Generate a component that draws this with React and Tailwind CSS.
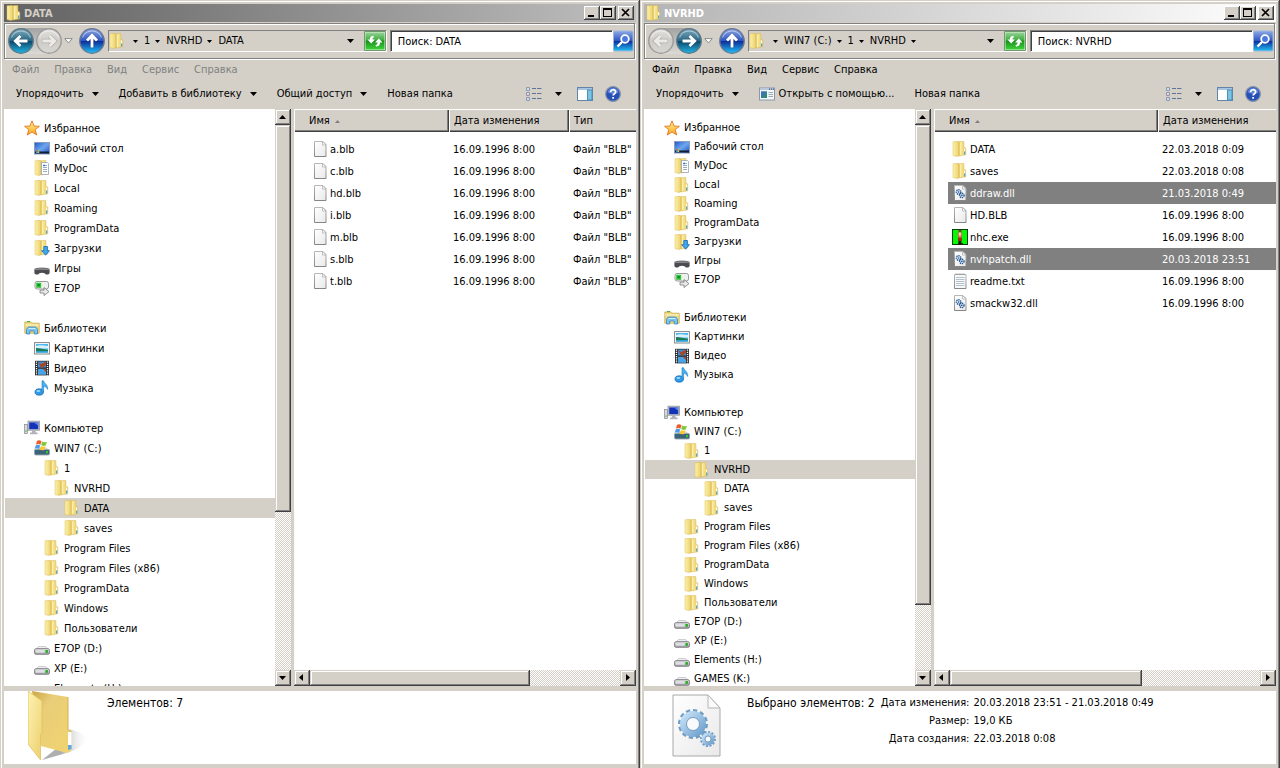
import { useState } from 'react';
import clsx from 'clsx';

const RAISED =
  'bg-[#d4d0c8] shadow-[inset_-1px_-1px_#404040,inset_1px_1px_#d4d0c8,inset_-2px_-2px_#808080,inset_2px_2px_#ffffff]';
const BUTTON =
  'bg-[#d4d0c8] shadow-[inset_-1px_-1px_#404040,inset_1px_1px_#ffffff,inset_-2px_-2px_#808080]';
const TRACK = 'bg-[conic-gradient(#d4d0c8_25%,#ffffff_0_50%,#d4d0c8_0_75%,#ffffff_0)] bg-[size:2px_2px]';

/* ---------- icons ---------- */

const Defs = () => (
  <svg width="0" height="0" className="absolute" aria-hidden="true">
    <defs>
      <linearGradient id="flap" x1="0" x2="1" y1="0" y2="0">
        <stop offset="0" stopColor="#fdf2a8" />
        <stop offset="1" stopColor="#ecd070" />
      </linearGradient>
      <linearGradient id="sheet" x1="0" x2="1" y1="0" y2="0">
        <stop offset="0" stopColor="#cfa93c" />
        <stop offset="0.45" stopColor="#f8e694" />
        <stop offset="1" stopColor="#e8ca62" />
      </linearGradient>
      <linearGradient id="bigFlap" x1="0" x2="1" y1="0" y2="1">
        <stop offset="0" stopColor="#fdf3b4" />
        <stop offset="1" stopColor="#edcf6c" />
      </linearGradient>
      <linearGradient id="bigBack" x1="0" x2="1" y1="0" y2="1">
        <stop offset="0" stopColor="#c9a646" />
        <stop offset="0.3" stopColor="#e9cd78" />
        <stop offset="1" stopColor="#f1d46e" />
      </linearGradient>
      <linearGradient id="shade" x1="0" x2="1" y1="0" y2="0">
        <stop offset="0.4" stopColor="#8c8c8c" stopOpacity="0.7" />
        <stop offset="1" stopColor="#ffffff" stopOpacity="0" />
      </linearGradient>
      <linearGradient id="page" x1="0" x2="1" y1="0" y2="1">
        <stop offset="0" stopColor="#ffffff" />
        <stop offset="1" stopColor="#e9e9e9" />
      </linearGradient>
      <linearGradient id="pageEdge" x1="0" x2="0" y1="0" y2="1">
        <stop offset="0" stopColor="#b8b8b8" />
        <stop offset="1" stopColor="#868686" />
      </linearGradient>
      <linearGradient id="teal" x1="0" x2="0" y1="0" y2="1">
        <stop offset="0" stopColor="#7fa9bb" />
        <stop offset="0.48" stopColor="#2b6a88" />
        <stop offset="0.52" stopColor="#0d4a6c" />
        <stop offset="1" stopColor="#22b4e6" />
      </linearGradient>
      <linearGradient id="royal" x1="0" x2="0" y1="0" y2="1">
        <stop offset="0" stopColor="#8fa9e4" />
        <stop offset="0.48" stopColor="#2f58c4" />
        <stop offset="0.52" stopColor="#0f2f9c" />
        <stop offset="1" stopColor="#1fc2f4" />
      </linearGradient>
      <linearGradient id="dim" x1="0" x2="0" y1="0" y2="1">
        <stop offset="0" stopColor="#e2e0dc" />
        <stop offset="0.5" stopColor="#cfcdc8" />
        <stop offset="1" stopColor="#d8d6d1" />
      </linearGradient>
      <linearGradient id="green" x1="0" x2="0" y1="0" y2="1">
        <stop offset="0" stopColor="#9ad49a" />
        <stop offset="0.45" stopColor="#3fae40" />
        <stop offset="0.5" stopColor="#1b8f1c" />
        <stop offset="1" stopColor="#3fd63a" />
      </linearGradient>
      <linearGradient id="star" x1="0" x2="0" y1="0" y2="1">
        <stop offset="0" stopColor="#fff3a0" />
        <stop offset="1" stopColor="#f8a51c" />
      </linearGradient>
      <linearGradient id="screen" x1="0" x2="1" y1="0" y2="1">
        <stop offset="0" stopColor="#1f57c8" />
        <stop offset="0.5" stopColor="#6fa6f0" />
        <stop offset="1" stopColor="#1f4fb4" />
      </linearGradient>
      <linearGradient id="metal" x1="0" x2="0" y1="0" y2="1">
        <stop offset="0" stopColor="#e8e8ea" />
        <stop offset="1" stopColor="#9a9aa0" />
      </linearGradient>
      <linearGradient id="gear" x1="0" x2="1" y1="0" y2="1">
        <stop offset="0" stopColor="#c6e2f6" />
        <stop offset="1" stopColor="#6fa0cc" />
      </linearGradient>
    </defs>
  </svg>
);

const Svg = ({ children }) => (
  <svg width="16" height="16" viewBox="0 0 16 16" className="shrink-0" aria-hidden="true">
    {children}
  </svg>
);

const folderShape = (
  <>
    <path d="M5 .8 11.800.4l.2 6 1.800.6v6.800L7 15l-2-.6z" fill="url(#sheet)" stroke="#d8b650" strokeWidth=".5" />
    <path d="M1 .8 5.500.4 6.800 1.500v12L5.500 15.600 1 14.600z" fill="url(#flap)" stroke="#dcbc58" strokeWidth=".5" />
    <path d="M8.500 1.500v12.500" stroke="#fdf3b8" strokeWidth=".8" />
    <path d="M12.600 7.500v3" stroke="#ffffff" strokeWidth="1.200" />
    <path d="M12.600 10.500v3" stroke="#49a8e8" strokeWidth="1.200" />
  </>
);

const pageShape = (
  <>
    <path d="M2.500.5h8.500l3 3v12H2.500z" fill="url(#page)" stroke="url(#pageEdge)" />
    <path d="M10.500.5v3.500h3.500z" fill="#ffffff" stroke="#b0b0b0" strokeWidth=".8" strokeLinejoin="round" />
  </>
);

const driveShape = (
  <>
    <path d="M2.5 8.5 4.5 6.6h7l2 1.9z" fill="#f4f4f6" stroke="#a8a8ae" strokeWidth=".6" />
    <rect x=".5" y="8.7" width="15" height="5.6" rx="1.6" fill="url(#metal)" stroke="#6e6e74" strokeWidth=".8" />
    <rect x="2" y="10.2" width="8.5" height="2.4" fill="#dfe0e6" />
    <rect x="11.5" y="10" width="2.4" height="2.8" fill="#23b01c" />
  </>
);

const ICONS = {
  folder: folderShape,
  docs: (
    <>
      {folderShape}
      <path d="M7.5 2.5h6l1 1v11h-7z" fill="#ffffff" stroke="#8e9aa8" strokeWidth=".7" />
      <path d="M9 5.5h4M9 7.5h4M9 9.5h4M9 11.5h4" stroke="#7d97b8" strokeWidth=".8" />
      <path d="M9 5.5h2" stroke="#2a7de0" strokeWidth="1.4" />
    </>
  ),
  downloads: (
    <>
      {folderShape}
      <path d="M9.8 6.5h3.6v4.2h2.1l-3.9 4.5-3.9-4.5h2.1z" fill="#3fa9f0" stroke="#1767b0" strokeWidth=".8" />
    </>
  ),
  star: (
    <path
      d="M8 .8 10 6l5.4.3-4.2 3.4 1.5 5.3L8 12l-4.7 3 1.5-5.3L.6 6.3 6 6z"
      fill="url(#star)"
      stroke="#e2761b"
      strokeWidth=".9"
      strokeLinejoin="round"
    />
  ),
  desktop: (
    <>
      <rect x=".5" y="2.5" width="15" height="11.5" fill="url(#screen)" stroke="#8a9cc0" />
      <path d="M1 12.5h14" stroke="#101c38" strokeWidth="2" />
      <path d="M2.2 10.6h1.6" stroke="#e8542a" strokeWidth="1.4" />
      <path d="M3.8 10.6h1.4" stroke="#8ed43a" strokeWidth="1.4" />
      <path d="M2.2 12.2h1.6" stroke="#49c0ff" strokeWidth="1.4" />
      <path d="M3.8 12.2h1.4" stroke="#ffd83a" strokeWidth="1.4" />
    </>
  ),
  gamepad: (
    <>
      <path d="M2 8.500C4 6.500 12 6.500 14 8.500z" fill="#c9c9cc" />
      <rect x=".4" y="8.3" width="15.2" height="6.2" rx="1.8" fill="#4c4c50" />
      <path d="M.6 9.4h14.8" stroke="#86868a" strokeWidth="1.2" />
      <path d="M4 15c1-3 7-3 8 0z" fill="#ffffff" />
    </>
  ),
  link: (
    <>
      <rect x="1" y="1.5" width="13.5" height="7.5" rx="2" fill="#eef0ee" stroke="#8c908c" strokeWidth=".9" />
      <rect x="2.2" y="2.8" width="5" height="5" fill="#2ec53a" />
      <rect x="3.6" y="4" width="2.2" height="2.2" fill="#0b8a1a" />
      <path d="M6 10.2h4V7.6l5 4-5 4v-2.6H6z" fill="#e9e9e9" stroke="#7a7a7a" strokeWidth=".8" />
    </>
  ),
  library: (
    <>
      <path d="M.8 2h6l1 1.2h7.4v10H.8z" fill="#f0db86" stroke="#c9a845" strokeWidth=".8" />
      <path d="M3 1.6h3" stroke="#3fae40" />
      <path d="M1.2 5h13.6" stroke="#fff6c6" />
      <path d="M2.5 14V9.2L4.3 7h7.4l1.8 2.2V14h-3.2v-3H5.7v3z" fill="#7cc4ee" stroke="#3786bd" strokeWidth=".8" />
      <path d="M4.5 8.5h7" stroke="#cdeafa" />
    </>
  ),
  pictures: (
    <>
      <rect x=".6" y="2.6" width="14.8" height="11.4" fill="#ffffff" stroke="#80868c" />
      <rect x="2" y="4" width="12" height="8.6" fill="#4fb8ee" />
      <path d="M2 6.2c4-2 6-.6 12-.2v2.6H2z" fill="#d8f2fc" />
      <path d="M2 8c4 0 7 1 12 2v1.2H2z" fill="#1d7a52" />
      <path d="M2 11.2h12v1.4H2z" fill="#2b9fd0" />
    </>
  ),
  video: (
    <>
      <rect x="1" y=".8" width="14" height="14.6" fill="#2b2c30" />
      <rect x="4" y="1.5" width="8" height="6" fill="#3d8fd8" />
      <rect x="4" y="8.8" width="8" height="6" fill="#4aa4e4" />
      <path d="M4 1.500 7 4l5-2.500V5L9 7.500H7zM9 9h3v3z" fill="#a4482c" />
      <path d="M2.500 1.500v14M13.500 1.500v14" stroke="#ffffff" strokeWidth="1.3" strokeDasharray="1.2 1" />
    </>
  ),
  music: (
    <>
      <ellipse cx="5.2" cy="12" rx="4.2" ry="3.2" fill="#2f9be6" stroke="#1762a8" strokeWidth=".7" />
      <path d="M8 12V.8h1.6c.4 2.8 4.6 3.6 4 8.6-1-2.2-2.4-3-4-3.2V12z" fill="#49b2f2" stroke="#1f78c0" strokeWidth=".6" />
      <ellipse cx="4.4" cy="11" rx="2" ry="1" fill="#9ad8fa" />
    </>
  ),
  computer: (
    <>
      <rect x=".6" y="4.5" width="3" height="9" fill="#d6d8dc" stroke="#84888e" strokeWidth=".7" />
      <rect x="1.4" y="10.5" width="1.2" height="1.2" fill="#35b52c" />
      <rect x="4" y="1.2" width="11.5" height="9" fill="#c8ccd2" stroke="#8c9096" strokeWidth=".8" />
      <rect x="5.2" y="2.4" width="9.1" height="6.8" fill="#1432b8" />
      <path d="M10 2.4h4.3v3.4z" fill="#5c86f0" />
      <path d="M8 10.5h3.6v2H8zM6 12.6h7.6v1.6H6z" fill="#aeb2b8" />
    </>
  ),
  windrive: (
    <>
      <path d="M1.5 9.5 4 7.5h8l2.5 2z" fill="#d6dce2" />
      <rect x=".4" y="9.4" width="15.2" height="5.6" rx="1.4" fill="#3c6478" stroke="#9aa6ae" strokeWidth=".9" />
      <rect x="12" y="11" width="2" height="2.4" fill="#34c42c" />
      <path d="M3 .8C5-.2 6 .2 7.500 1.200L6.400 4.800C5 3.800 3.800 3.800 2 4.600z" fill="#ee5a2a" />
      <path d="M8.200 1.500c1.600 1 3 1 4.800.2l-1.100 3.600c-1.600.8-3.200.8-4.700-.2z" fill="#7cc83a" />
      <path d="M1.800 5.300c1.800-.8 3-.8 4.400.2L5.100 9.100c-1.400-1-2.800-1-4.400-.2z" fill="#4a9cec" />
      <path d="M6.900 5.900c1.400 1 3.200 1 4.700.2l-1.100 3.600c-1.600.8-3.200.8-4.700-.2z" fill="#f8c82c" />
    </>
  ),
  drive: driveShape,
  page: pageShape,
  dll: (
    <>
      {pageShape}
      <circle cx="6.6" cy="7" r="2.3" fill="#d4e6f8" stroke="#27588f" strokeWidth="1.4" strokeDasharray="1.2 .7" />
      <circle cx="6.6" cy="7" r=".8" fill="#27588f" />
      <circle cx="9.8" cy="10.4" r="2.2" fill="#d4e6f8" stroke="#27588f" strokeWidth="1.4" strokeDasharray="1.2 .7" />
      <circle cx="9.8" cy="10.4" r=".8" fill="#27588f" />
    </>
  ),
  text: (
    <>
      <path d="M2.500 1.500h11.500v14H2.500z" fill="#f6f8fa" stroke="url(#pageEdge)" />
      <path d="M3.500 1.200h10" stroke="#8a8a8a" strokeWidth="1.600" strokeDasharray="1 1" />
      <path d="M4 4.500h8.500M4 6.500h8.500M4 8.500h8.500M4 10.500h8.500M4 12.500h8.500" stroke="#b4c2ce" />
    </>
  ),
  exe: (
    <>
      <rect x=".5" y=".5" width="15" height="15" fill="#00fa00" stroke="#0a3c0a" />
      <path d="M6.5 1h3v2.6h-3z" fill="#8a3a20" />
      <path d="M5.6 3.6h4.600v5H5.600z" fill="#d8745a" />
      <path d="M7 3.400h1.800v3H7z" fill="#f4e2d0" />
      <path d="M6 8.600h4V12H6z" fill="#a02c20" />
      <path d="M6.600 12h2.800v2.200H11V15.400H6z" fill="#201008" />
    </>
  ),
  openwith: (
    <>
      <rect x=".5" y="2" width="15" height="12" fill="#f4f6f8" stroke="#8a98a8" />
      <path d="M1 3.2h14" stroke="#b8c8dc" strokeWidth="1.6" />
      <path d="M10 3.2h1.2M12 3.2h1.2M14 3.2h1" stroke="#3c5c88" strokeWidth="1.2" />
      <rect x="2" y="5.5" width="6" height="6.5" fill="#2f8a7c" />
      <path d="M2 5.5h6L2 12z" fill="#3f74b8" />
      <path d="M9.5 6.5H14M9.5 8.5H14M9.5 10.5H14" stroke="#9aa8b8" />
    </>
  ),
};

const Icon = ({ name }) => <Svg>{ICONS[name]}</Svg>;

const Caret = ({ small }) =>
  small ? (
    <svg width="5" height="3" viewBox="0 0 5 3" className="shrink-0" aria-hidden="true">
      <path d="M0 0h5L2.5 3z" />
    </svg>
  ) : (
    <svg width="7" height="4" viewBox="0 0 7 4" className="shrink-0" aria-hidden="true">
      <path d="M0 0h7L3.5 4z" />
    </svg>
  );

const Orb = ({ fill, ring, arrow, rotate }) => (
  <svg width="26" height="26" viewBox="0 0 26 26" aria-hidden="true">
    <circle cx="13" cy="13" r="12.2" fill={fill} stroke={ring} strokeWidth="1.4" />
    <path d="M3.5 9.5a10.2 10.2 0 0 1 19 0" fill="none" stroke="#ffffff" strokeOpacity=".45" strokeWidth="1.2" />
    <g transform={`rotate(${rotate} 13 13)`} fill="none">
      <path d="M20 13H8.500M12.500 8 7.300 13l5.200 5" stroke="#000000" strokeOpacity=".15" strokeWidth="4.500" />
      <path d="M19.5 13H8.500M12.500 8 7.300 13l5.200 5" stroke={arrow} strokeWidth="2.800" />
    </g>
  </svg>
);

const BigFolder = () => (
  <svg width="62" height="70" viewBox="0 0 62 70" className="shrink-0" aria-hidden="true">
    <path d="M42 38c6 2 14 5 20 9-6 6-12 11-20 14L14 69 38 50z" fill="url(#shade)" />
    <path d="M4 0 40 6v33l3.500 1.500V59L39 62 13 55z" fill="url(#bigBack)" />
    <path d="M40 6v33l3.500 1.500" fill="none" stroke="#d4b04c" />
    <path d="M40 41h3.500v13H40z" fill="#ffffff" />
    <path d="M40 54h3.500v4L40 59z" fill="#5aa8e6" />
    <path d="M0 0 14 10v32l-1.500 2v25L0 53z" fill="url(#bigFlap)" stroke="#e2c25c" strokeWidth=".8" />
  </svg>
);

const Gear = ({ cx, cy, r, tooth, hole }) => (
  <>
    <circle cx={cx} cy={cy} r={r} fill="none" stroke="#6f9cc6" strokeWidth={tooth} pathLength="48" strokeDasharray="2.400 1.600" />
    <circle cx={cx} cy={cy} r={(r + hole) / 2} fill="none" stroke="url(#gear)" strokeWidth={r - hole} />
    <circle cx={cx} cy={cy} r={hole} fill="#f8fafc" stroke="#5d88b4" strokeWidth=".8" />
  </>
);

const BigDll = () => (
  <svg width="50" height="64" viewBox="0 0 50 64" className="shrink-0" aria-hidden="true">
    <path d="M1 1h35l12 13v48H1z" fill="url(#page)" stroke="#a8a8a8" />
    <path d="M36 1v13h12z" fill="#fafafa" stroke="#b4b4b4" strokeLinejoin="round" />
    <Gear cx={21} cy={30} r={13} tooth={4} hole={6.5} />
    <Gear cx={36} cy={45} r={6.5} tooth={3} hole={3} />
  </svg>
);

/* ---------- chrome ---------- */

const TitleBar = ({ title, bar, color }) => (
  <header className={clsx('flex h-[18px] shrink-0 items-center bg-linear-to-r px-[2px]', bar)}>
    <Icon name="folder" />
    <h1 className={clsx('ml-[2px] flex-1 pt-px text-[11px] leading-[14px] font-bold', color)}>{title}</h1>
    <button aria-label="Свернуть" className={clsx('h-[14px] w-4', BUTTON)}>
      <svg width="16" height="14" aria-hidden="true">
        <path d="M4 9h6v2H4z" />
      </svg>
    </button>
    <button aria-label="Развернуть" className={clsx('h-[14px] w-4', BUTTON)}>
      <svg width="16" height="14" aria-hidden="true">
        <path d="M3 2h9v9H3zM4 4v6h7V4z" fillRule="evenodd" />
      </svg>
    </button>
    <button aria-label="Закрыть" className={clsx('ml-[2px] h-[14px] w-4', BUTTON)}>
      <svg width="16" height="14" aria-hidden="true">
        <path d="m4 3 7 7M11 3l-7 7" stroke="#000" strokeWidth="1.7" />
      </svg>
    </button>
  </header>
);

const NavBar = ({ active, crumbs, search, trailing }) => {
  const [query, setQuery] = useState('Поиск: ' + search);
  return (
    <div className="mt-px mr-px flex h-9 shrink-0 items-center border border-[#808080] pl-[3px] shadow-[inset_1px_1px_#ffffff,1px_1px_#ffffff]">
      <div className="flex gap-[2px] rounded-full bg-linear-to-b from-[#a4a4a4] to-[#dcdad6]">
        <button aria-label="Назад">
          {active === 'back' ? (
            <Orb fill="url(#teal)" ring="#5c7886" arrow="#ffffff" rotate={0} />
          ) : (
            <Orb fill="url(#dim)" ring="#9c9c9c" arrow="#eceae6" rotate={0} />
          )}
        </button>
        <button aria-label="Вперед">
          {active === 'forward' ? (
            <Orb fill="url(#teal)" ring="#5c7886" arrow="#ffffff" rotate={180} />
          ) : (
            <Orb fill="url(#dim)" ring="#9c9c9c" arrow="#eceae6" rotate={180} />
          )}
        </button>
      </div>
      <button aria-label="Последние страницы" className="ml-[2px]">
        <svg width="9" height="6" viewBox="0 0 9 6" aria-hidden="true">
          <path d="M.8.6h7.400L4.500 5z" fill="#ffffff" stroke="#8c8c8c" />
        </svg>
      </button>
      <button aria-label="Вверх" className="ml-[6px]">
        <Orb fill="url(#royal)" ring="#6a7894" arrow="#ffffff" rotate={90} />
      </button>
      <div className="ml-[3px] flex h-[22px] min-w-0 flex-[283] items-center border border-t-[#808080] border-r-white border-b-white border-l-[#808080]">
        <Icon name="folder" />
        <span className="ml-2">
          <Caret small />
        </span>
        {crumbs.map((crumb, i) => (
          <button key={crumb} className="ml-[6px] flex items-center gap-[5px]">
            {crumb}
            {(trailing || i < crumbs.length - 1) && <Caret small />}
          </button>
        ))}
        <button aria-label="Предыдущие расположения" className="ml-auto">
          <Caret />
        </button>
        <button aria-label="Обновить" className="ml-[10px]">
          <svg width="22" height="20" viewBox="0 0 22 20" aria-hidden="true">
            <rect x="1" y="1" width="20" height="18" rx="1" fill="url(#green)" stroke="#d9f0d6" />
            <path d="M.5.5h21v19H.5z" fill="none" stroke="#6f9a6c" />
            <path
              d="M9.500 5c-3 0-3.500 1.500-3.500 3.500H3.500L7.200 12.500 11 8.500H8.500c0-1.500.3-2 1.500-2zM12 15.500c3 0 4-1.500 4-4h2.500L14.800 7.500 11 11.500h2.500c0 1.500-.5 2.200-2 2.500z"
              fill="#ffffff"
            />
          </svg>
        </button>
      </div>
      <input
        aria-label="Поиск"
        value={query}
        onChange={(e) => setQuery(e.target.value)}
        className="ml-[3px] h-[22px] min-w-0 flex-[219] border border-t-[#808080] border-r-white border-b-white border-l-[#808080] bg-white pl-[7px] shadow-[inset_1px_1px_#404040] outline-none"
      />
      <button aria-label="Найти">
        <svg width="21" height="22" viewBox="0 0 21 22" aria-hidden="true">
          <rect x=".5" y="1" width="19.5" height="20" rx="1.5" fill="url(#royal)" stroke="#9fb4dc" />
          <circle cx="12" cy="9" r="3.8" fill="#4a78dc" stroke="#ffffff" strokeWidth="1.8" />
          <path d="m9 12-4.500 4.500" stroke="#ffffff" strokeWidth="2.4" />
        </svg>
      </button>
    </div>
  );
};

const MENU = ['Файл', 'Правка', 'Вид', 'Сервис', 'Справка'];

const MenuBar = ({ color }) => (
  <nav className={clsx('mt-px flex h-5 shrink-0 items-center gap-[15px] pl-2', color)}>
    {MENU.map((item) => (
      <button key={item}>{item}</button>
    ))}
  </nav>
);

const Toolbar = ({ actions }) => (
  <div className="flex h-[29px] shrink-0 items-center gap-5 pr-[15px] pb-[2px] pl-3">
    {actions.map(({ label, icon, menu }) => (
      <button key={label} className="flex items-center whitespace-nowrap">
        {icon && (
          <span className="mr-1">
            <Icon name={icon} />
          </span>
        )}
        {label}
        {menu && (
          <span className="ml-2">
            <Caret />
          </span>
        )}
      </button>
    ))}
    <div className="ml-auto flex items-center">
      <button aria-label="Вид" className="flex items-center gap-[13px]">
        <Svg>
          <path d="M.5 1.500h3v3h-3zM.5 6.500h3v3h-3zM.5 11.500h3v3h-3z" fill="#ffffff" stroke="#8c9cb0" />
          <path d="M1.500 2.500h1v1h-1z" fill="#3a78c8" />
          <path d="M1.500 7.500h1v1h-1z" fill="#e03020" />
          <path d="M1.500 12.500h1v1h-1z" fill="#2a50c0" />
          <path d="M6 2.500h4M11 2.500h4.500M6 7.500h4M11 7.500h4.500M6 12.500h4M11 12.500h4.500" stroke="#5c7498" />
        </Svg>
        <Caret />
      </button>
      <button aria-label="Область просмотра" className="ml-[15px]">
        <Svg>
          <rect x=".5" y="1.5" width="15" height="13" fill="#ffffff" stroke="#6484a8" />
          <path d="M1 3h14" stroke="#a8c4e0" strokeWidth="2" />
          <rect x="10.5" y="4" width="4.5" height="10" fill="#7cc4e4" stroke="#4a90b8" />
        </Svg>
      </button>
      <button aria-label="Справка" className="ml-3">
        <svg width="16" height="16" viewBox="0 0 16 16" aria-hidden="true">
          <circle cx="8" cy="8" r="7.4" fill="#2450b8" stroke="#8a94a8" strokeWidth="1.2" />
          <path d="M2.500 6.500a5.600 5.600 0 0 1 11 0C11 8.500 6 8 2.500 6.500z" fill="#5c84dc" />
          <path
            d="M5.600 6.200c0-3.300 5-3.200 5-.3 0 1.800-2.500 1.900-2.500 3.700M8.100 11v1.700"
            fill="none"
            stroke="#ffffff"
            strokeWidth="1.7"
          />
        </svg>
      </button>
    </div>
  </div>
);

/* ---------- scroll bars ---------- */

const ScrollY = ({ thumb }) => (
  <div className={clsx('flex w-4 shrink-0 flex-col', TRACK)}>
    <button aria-label="Прокрутить вверх" className={clsx('h-4 shrink-0', RAISED)}>
      <svg width="16" height="16" aria-hidden="true">
        <path d="M4 10h7L7.500 6z" />
      </svg>
    </button>
    <div className="flex min-h-0 flex-1 flex-col">
      <div className={clsx(thumb, RAISED)} />
    </div>
    <button aria-label="Прокрутить вниз" className={clsx('h-4 shrink-0', RAISED)}>
      <svg width="16" height="16" aria-hidden="true">
        <path d="M4 6h7L7.500 10z" />
      </svg>
    </button>
  </div>
);

const ScrollX = ({ thumb }) => (
  <div className={clsx('flex h-4 shrink-0', TRACK)}>
    <button aria-label="Прокрутить влево" className={clsx('w-4 shrink-0', RAISED)}>
      <svg width="16" height="16" aria-hidden="true">
        <path d="M9 4v7L5 7.500z" />
      </svg>
    </button>
    <div className="flex min-w-0 flex-1">
      <div className={clsx(thumb, RAISED)} />
    </div>
    <button aria-label="Прокрутить вправо" className={clsx('w-4 shrink-0', RAISED)}>
      <svg width="16" height="16" aria-hidden="true">
        <path d="M6 4v7l4-3.500z" />
      </svg>
    </button>
  </div>
);

/* ---------- navigation tree ---------- */

const INDENT = ['pl-5', 'pl-[30px]', 'pl-10', 'pl-[50px]', 'pl-[60px]'];

const FAVORITES = [
  { level: 0, icon: 'star', label: 'Избранное' },
  { level: 1, icon: 'desktop', label: 'Рабочий стол' },
  { level: 1, icon: 'docs', label: 'MyDoc' },
  { level: 1, icon: 'folder', label: 'Local' },
  { level: 1, icon: 'folder', label: 'Roaming' },
  { level: 1, icon: 'folder', label: 'ProgramData' },
  { level: 1, icon: 'downloads', label: 'Загрузки' },
  { level: 1, icon: 'gamepad', label: 'Игры' },
  { level: 1, icon: 'link', label: 'E7OP' },
];

const LIBRARIES = [
  { level: 0, icon: 'library', label: 'Библиотеки' },
  { level: 1, icon: 'pictures', label: 'Картинки' },
  { level: 1, icon: 'video', label: 'Видео' },
  { level: 1, icon: 'music', label: 'Музыка' },
];

const COMPUTER = [
  { level: 0, icon: 'computer', label: 'Компьютер' },
  { level: 1, icon: 'windrive', label: 'WIN7 (C:)' },
  { level: 2, icon: 'folder', label: '1' },
  { level: 3, icon: 'folder', label: 'NVRHD' },
  { level: 4, icon: 'folder', label: 'DATA' },
  { level: 4, icon: 'folder', label: 'saves' },
  { level: 2, icon: 'folder', label: 'Program Files' },
  { level: 2, icon: 'folder', label: 'Program Files (x86)' },
  { level: 2, icon: 'folder', label: 'ProgramData' },
  { level: 2, icon: 'folder', label: 'Windows' },
  { level: 2, icon: 'folder', label: 'Пользователи' },
  { level: 1, icon: 'drive', label: 'E7OP (D:)' },
  { level: 1, icon: 'drive', label: 'XP (E:)' },
  { level: 1, icon: 'drive', label: 'Elements (H:)' },
];

const GAMES = { level: 1, icon: 'drive', label: 'GAMES (K:)' };

const Tree = ({ groups, selected, row, gap }) => (
  <nav className="min-w-0 flex-1 overflow-hidden bg-white pt-[9px]">
    {groups.map((group, g) => (
      <ul key={g} className={clsx(g > 0 && gap)}>
        {group.map(({ level, icon, label }) => (
          <li key={label} className={clsx('ml-px', label === selected && 'bg-[#d4d0c8]')}>
            <a href="#" className={clsx('-ml-px flex items-center gap-1 whitespace-nowrap', row, INDENT[level])}>
              <Icon name={icon} />
              <span className="pt-px">{label}</span>
            </a>
          </li>
        ))}
      </ul>
    ))}
  </nav>
);

/* ---------- file list ---------- */

const HEAD = 'h-[23px] bg-[#d4d0c8] pt-px text-left font-normal';
const HEAD_MID = 'shadow-[inset_1px_1px_#ffffff,inset_-1px_-1px_#404040,inset_-2px_-2px_#808080]';
const HEAD_END = 'shadow-[inset_1px_1px_#ffffff,inset_0_-1px_#404040,inset_0_-2px_#808080]';

const FileList = ({ files, nameWidth, withType, thumb }) => (
  <div className="flex min-w-0 flex-1 flex-col bg-white">
    <div className="min-h-0 flex-1 overflow-hidden">
      <table className="w-full table-fixed whitespace-nowrap">
        <thead>
          <tr>
            <th className={clsx(HEAD, HEAD_MID, nameWidth, 'pl-[15px]')}>
              <button className="flex items-center gap-[5px]">
                Имя
                <svg width="5" height="3" viewBox="0 0 5 3" aria-hidden="true">
                  <path d="M0 3h5L2.500 0z" fill="#808080" />
                </svg>
              </button>
            </th>
            <th className={clsx(HEAD, withType ? [HEAD_MID, 'w-[120px]'] : HEAD_END, 'pl-[5px]')}>
              <button>Дата изменения</button>
            </th>
            {withType && (
              <th className={clsx(HEAD, HEAD_END, 'pl-[5px]')}>
                <button>Тип</button>
              </th>
            )}
          </tr>
        </thead>
        <tbody className="before:block before:h-[6px]">
          {files.map(({ icon, name, date, selected }) => (
            <tr key={name} className={clsx(selected && 'text-white')}>
              <td className="pl-[14px]">
                <div className={clsx('flex h-[22px] items-center gap-[2px] pl-1', selected && 'bg-[#808080]')}>
                  <Icon name={icon} />
                  <span className="pt-[2px]">{name}</span>
                </div>
              </td>
              <td className={clsx('pt-[2px] pl-1', selected && 'bg-[#808080]')}>{date}</td>
              {withType && <td className="pt-[2px] pl-1">Файл "BLB"</td>}
            </tr>
          ))}
        </tbody>
      </table>
    </div>
    <ScrollX thumb={thumb} />
  </div>
);

/* ---------- window ---------- */

const Explorer = ({ title, nav, menuColor, actions, tree, list, children }) => (
  <section className="flex min-w-0 flex-1 flex-col overflow-hidden bg-[#d4d0c8] p-1 shadow-[inset_-1px_0_#404040,inset_1px_0_#d4d0c8,inset_0_1px_#d4d0c8,inset_-2px_0_#808080,inset_2px_2px_#ffffff]">
    <TitleBar {...title} />
    <NavBar {...nav} />
    <MenuBar color={menuColor} />
    <Toolbar actions={actions} />
    <div className="flex min-h-0 flex-1">
      <div className="mr-[3px] flex w-[287px] shrink-0">
        <Tree {...tree} />
        <ScrollY thumb={tree.thumb} />
      </div>
      <FileList {...list} />
    </div>
    <footer className="mt-[5px] flex h-[73px] shrink-0 bg-white">{children}</footer>
  </section>
);

const BLB_FILES = ['a.blb', 'c.blb', 'hd.blb', 'i.blb', 'm.blb', 's.blb', 't.blb'].map((name) => ({
  icon: 'page',
  name,
  date: '16.09.1996 8:00',
}));

const NVRHD_FILES = [
  { icon: 'folder', name: 'DATA', date: '22.03.2018 0:09' },
  { icon: 'folder', name: 'saves', date: '22.03.2018 0:08' },
  { icon: 'dll', name: 'ddraw.dll', date: '21.03.2018 0:49', selected: true },
  { icon: 'page', name: 'HD.BLB', date: '16.09.1996 8:00' },
  { icon: 'exe', name: 'nhc.exe', date: '16.09.1996 8:00' },
  { icon: 'dll', name: 'nvhpatch.dll', date: '20.03.2018 23:51', selected: true },
  { icon: 'text', name: 'readme.txt', date: '16.09.1996 8:00' },
  { icon: 'dll', name: 'smackw32.dll', date: '16.09.1996 8:00' },
];

const DETAILS = [
  ['Дата изменения:', '20.03.2018 23:51 - 21.03.2018 0:49'],
  ['Размер:', '19,0 КБ'],
  ['Дата создания:', '22.03.2018 0:08'],
];

export default function App() {
  return (
    <main className="flex h-screen bg-[#d4d0c8] font-['DejaVu_Sans_Condensed','DejaVu_Sans',sans-serif] text-[11px] leading-[14px] text-black">
      <Defs />
      <Explorer
        title={{ title: 'DATA', bar: 'from-[#626262] to-[#c0c0c0]', color: 'text-[#d4d0c8]' }}
        nav={{ active: 'back', crumbs: ['1', 'NVRHD', 'DATA'], search: 'DATA' }}
        menuColor="text-[#808080]"
        actions={[
          { label: 'Упорядочить', menu: true },
          { label: 'Добавить в библиотеку', menu: true },
          { label: 'Общий доступ', menu: true },
          { label: 'Новая папка' },
        ]}
        tree={{
          groups: [FAVORITES, LIBRARIES, COMPUTER],
          selected: 'DATA',
          row: 'h-5',
          gap: 'mt-5',
          thumb: 'h-[71%]',
        }}
        list={{ files: BLB_FILES, nameWidth: 'w-[155px]', withType: true, thumb: 'w-[71%]' }}
      >
        <div className="w-[103px] shrink-0 pl-6">
          <BigFolder />
        </div>
        <p className="pt-1 text-[12px] leading-4">Элементов: 7</p>
      </Explorer>
      <Explorer
        title={{ title: 'NVRHD', bar: 'from-[#b4b4b4] to-[#ffffff]', color: 'text-white' }}
        nav={{ active: 'forward', crumbs: ['WIN7 (C:)', '1', 'NVRHD'], search: 'NVRHD', trailing: true }}
        menuColor="text-black"
        actions={[
          { label: 'Упорядочить', menu: true },
          { label: 'Открыть с помощью...', icon: 'openwith' },
          { label: 'Новая папка' },
        ]}
        tree={{
          groups: [FAVORITES, LIBRARIES, [...COMPUTER, GAMES]],
          selected: 'NVRHD',
          row: 'h-[19px]',
          gap: 'mt-[19px]',
          thumb: 'h-[88%]',
        }}
        list={{ files: NVRHD_FILES, nameWidth: 'w-[224px]', thumb: 'w-[62%]' }}
      >
        <div className="w-[103px] shrink-0 pt-[3px] pl-7">
          <BigDll />
        </div>
        <p className="pt-1 text-[12px] leading-4 whitespace-nowrap">Выбрано элементов: 2</p>
        <dl className="ml-[6px] grid grid-cols-[auto_auto] content-start gap-x-1 pt-[3px] leading-[18px] whitespace-nowrap">
          {DETAILS.map(([term, value]) => (
            <div key={term} className="contents">
              <dt className="text-right">{term}</dt>
              <dd>{value}</dd>
            </div>
          ))}
        </dl>
      </Explorer>
    </main>
  );
}
